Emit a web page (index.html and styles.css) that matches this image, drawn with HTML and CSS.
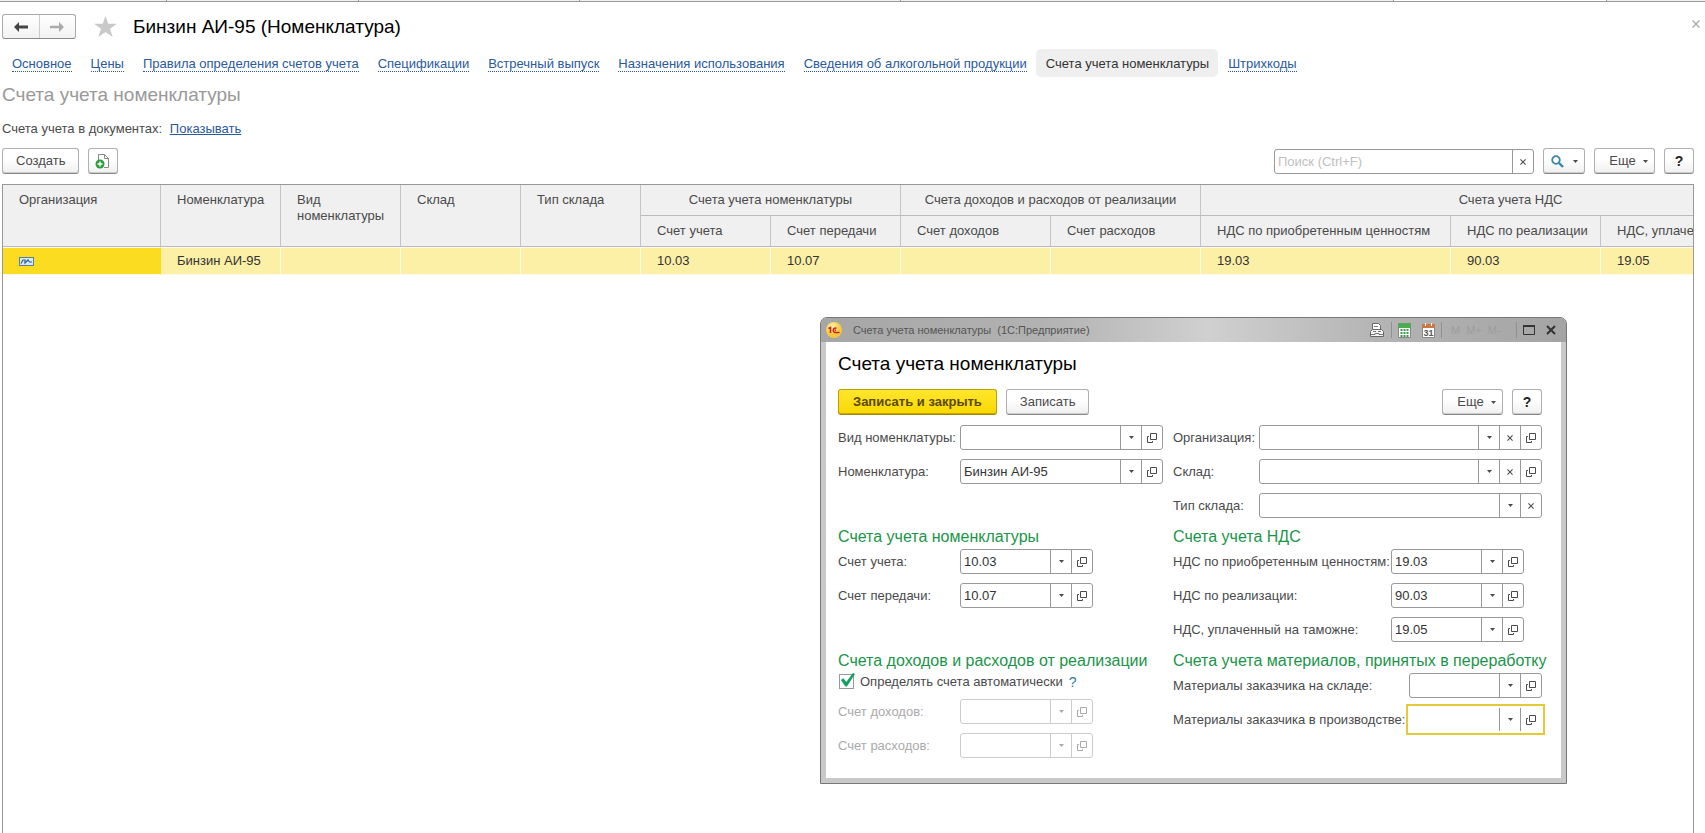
FILE: index.html
```html
<!DOCTYPE html>
<html lang="ru">
<head>
  <meta charset="UTF-8">
  <meta name="viewport" content="width=device-width, initial-scale=1.0">
  <title>Бинзин АИ-95 (Номенклатура)</title>
  <link rel="stylesheet" href="styles.css">
</head>
<body>

  <!-- Icon sprite -->
  <svg class="sprite" aria-hidden="true">
    <symbol id="i-down" viewBox="0 0 7 4"><path d="M0 0h7L3.500 4z" fill="currentColor"/></symbol>
    <symbol id="i-clear" viewBox="0 0 7 7"><path d="M.5.5l6 6M6.500.5l-6 6" stroke="currentColor" stroke-width="1.200" fill="none"/></symbol>
    <symbol id="i-open" viewBox="0 0 10 10"><path d="M3.500.5h6v6h-6zM2 3.500H.5v6h5V8" stroke="currentColor" fill="none"/></symbol>
  </svg>

  <!-- Edges of the window tabs -->
  <div class="tabstrip">
    <span class="edge e1"></span><span class="edge e2"></span><span class="edge e3"></span><span class="edge e4"></span><span class="edge e5"></span><span class="edge e6"></span>
  </div>

  <main class="page">
    <header class="page-head">
      <div class="history">
        <button type="button" aria-label="Назад"><svg width="14" height="10" viewBox="0 0 14 10"><path d="M0 5l5-5v3.500h9v3H5V10z" fill="#444"/></svg></button>
        <button type="button" aria-label="Вперед"><svg width="14" height="10" viewBox="0 0 14 10"><path d="M14 5L9 0v3.800H0v2.400h9V10z" fill="#aaa"/></svg></button>
      </div>
      <button type="button" class="plain star" aria-label="В избранное"><svg width="23" height="21" viewBox="0 0 23 21"><path d="M11.500 0l2.800 7.800H23l-7 5 2.700 8.200-7.200-5L4.300 21 7 12.800 0 7.800h8.700z" fill="#c9c9c9"/></svg></button>
      <h1>Бинзин АИ-95 (Номенклатура)</h1>
      <button type="button" class="plain page-close" aria-label="Закрыть"><svg width="8" height="8"><use href="#i-clear"/></svg></button>
    </header>

    <nav class="links">
      <a href="#"><span>Основное</span></a>
      <a href="#"><span>Цены</span></a>
      <a href="#"><span>Правила определения счетов учета</span></a>
      <a href="#"><span>Спецификации</span></a>
      <a href="#"><span>Встречный выпуск</span></a>
      <a href="#"><span>Назначения использования</span></a>
      <a href="#"><span>Сведения об алкогольной продукции</span></a>
      <a href="#" class="current"><span>Счета учета номенклатуры</span></a>
      <a href="#"><span>Штрихкоды</span></a>
    </nav>

    <h2>Счета учета номенклатуры</h2>
    <p class="docs">Счета учета в документах: <a href="#">Показывать</a></p>

    <div class="toolbar">
      <button type="button" class="btn">Создать</button>
      <button type="button" class="btn icon-btn" aria-label="Создать копированием">
        <svg width="16" height="16" viewBox="0 0 16 16"><path d="M3.500 7V1.500h6l4 4v9H9" fill="#fff" stroke="#888"/><path d="M9.500 1.500v4h4" fill="none" stroke="#888"/><circle cx="5" cy="11" r="4.500" fill="#2e9c3c"/><path d="M5 8.500v5M2.500 11h5" stroke="#fff" stroke-width="1.400"/></svg>
      </button>
      <div class="field search">
        <input type="text" placeholder="Поиск (Ctrl+F)" aria-label="Поиск">
        <button type="button" aria-label="Очистить"><svg width="6" height="6"><use href="#i-clear"/></svg></button>
      </div>
      <button type="button" class="btn find" aria-label="Найти">
        <svg width="13" height="13" viewBox="0 0 13 13"><circle cx="5" cy="5" r="3.800" fill="none" stroke="#3a86a8" stroke-width="1.800"/><path d="M8 8l4 4" stroke="#3a86a8" stroke-width="2.400"/></svg>
        <svg width="5" height="3"><use href="#i-down"/></svg>
      </button>
      <button type="button" class="btn more">Еще <svg width="5" height="3"><use href="#i-down"/></svg></button>
      <button type="button" class="btn help">?</button>
    </div>

    <div class="list">
      <table>
        <colgroup>
          <col class="w-org"><col class="w-name"><col class="w-name"><col class="w-name"><col class="w-name">
          <col class="w-acc"><col class="w-acc"><col class="w-inc"><col class="w-inc">
          <col class="w-vat"><col class="w-inc"><col class="w-customs">
        </colgroup>
        <thead>
          <tr>
            <th rowspan="2">Организация</th>
            <th rowspan="2">Номенклатура</th>
            <th rowspan="2">Вид номенклатуры</th>
            <th rowspan="2">Склад</th>
            <th rowspan="2">Тип склада</th>
            <th colspan="2" class="group">Счета учета номенклатуры</th>
            <th colspan="2" class="group">Счета доходов и расходов от реализации</th>
            <th colspan="3" class="group">Счета учета НДС</th>
          </tr>
          <tr>
            <th>Счет учета</th>
            <th>Счет передачи</th>
            <th>Счет доходов</th>
            <th>Счет расходов</th>
            <th>НДС по приобретенным ценностям</th>
            <th>НДС по реализации</th>
            <th>НДС, уплаченный на таможне</th>
          </tr>
        </thead>
        <tbody>
          <tr>
            <td class="active"><svg width="15" height="9" viewBox="0 0 15 9"><rect x=".5" y=".5" width="14" height="8" fill="#d8e8f4" stroke="#5580a8"/><path d="M2 6.500l2-3.500 2 0v3l3-3 1.500 2H13" fill="none" stroke="#2c5f96" stroke-width="1.200"/></svg></td>
            <td>Бинзин АИ-95</td>
            <td></td>
            <td></td>
            <td></td>
            <td>10.03</td>
            <td>10.07</td>
            <td></td>
            <td></td>
            <td>19.03</td>
            <td>90.03</td>
            <td>19.05</td>
          </tr>
        </tbody>
      </table>
    </div>
  </main>

  <!-- Record window -->
  <section class="window" role="dialog" aria-labelledby="winTitle">
    <div class="titlebar">
      <svg width="16" height="16" viewBox="0 0 16 16"><defs><radialGradient id="logo" cx=".4" cy=".3"><stop offset="0" stop-color="#fff6b0"/><stop offset="1" stop-color="#f6c63c"/></radialGradient></defs><circle cx="8" cy="8" r="8" fill="url(#logo)"/><path d="M2.500 6.500L4.500 5.500V11M10.500 6.300A2.200 2.200 0 1 0 8.500 10.400H13.500M10 8.300H8.800" fill="none" stroke="#c8201c" stroke-width="1.500"/></svg>
      <span class="caption">Счета учета номенклатуры&nbsp; (1С:Предприятие)</span>
      <div class="tools">
        <button type="button" class="plain" aria-label="Печать"><svg width="16" height="16" viewBox="0 0 16 16"><path d="M3.500 8V1.500h6l2 2V8" fill="#fff" stroke="#666"/><path d="M1.500 9.500l2-2h9l2 2v5h-13z" fill="#f4f4f4" stroke="#666"/><path d="M5 4.500h4M4 9.500h3M9 9.500h3M2 12.500h4v-1h4v1h4" fill="none" stroke="#777"/></svg></button>
        <i class="sep"></i>
        <button type="button" class="plain" aria-label="Калькулятор"><svg width="13" height="15" viewBox="0 0 13 15"><path d="M.5.5h12v14H.5z" fill="#fff" stroke="#888"/><path d="M0 0h13v5H0z" fill="#4faa58"/><path d="M3.500 6v8M6.500 6v8M9.500 6v8" stroke="#3f9b4c" stroke-width="2" stroke-dasharray="2 1"/></svg></button>
        <button type="button" class="plain calendar" aria-label="Календарь"><svg width="13" height="15" viewBox="0 0 13 15"><path d="M.5 1.500h12v13H.5z" fill="#fff" stroke="#888"/><path d="M0 1h13v4H0z" fill="#c87840"/><path d="M3.500 0v3M9.500 0v3" stroke="#fff"/><text x="6.500" y="13" text-anchor="middle" font-size="9" font-weight="bold" fill="#555">31</text></svg></button>
        <i class="sep"></i>
        <span class="memory"><span>M</span><span>M+</span><span>M-</span></span>
        <i class="sep"></i>
        <button type="button" class="plain" aria-label="Развернуть"><svg width="12" height="10" viewBox="0 0 12 10"><path d="M.5.5h11v9H.5z" fill="none" stroke="#333"/><path d="M0 1h12" stroke="#333" stroke-width="2"/></svg></button>
        <button type="button" class="plain" aria-label="Закрыть окно"><svg width="10" height="10" viewBox="0 0 10 10"><path d="M1 1l8 8M9 1L1 9" stroke="#333" stroke-width="2"/></svg></button>
      </div>
    </div>

    <form class="win-body">
      <h2 id="winTitle">Счета учета номенклатуры</h2>
      <div class="commands">
        <button type="button" class="btn primary">Записать и закрыть</button>
        <button type="button" class="btn">Записать</button>
        <button type="button" class="btn more">Еще <svg width="5" height="3"><use href="#i-down"/></svg></button>
        <button type="button" class="btn help">?</button>
      </div>

      <div class="groups">
        <div class="group-box left">
          <div class="row">
            <label for="kind">Вид номенклатуры:</label>
            <div class="field">
              <input type="text" id="kind">
              <button type="button" aria-label="Выбрать"><svg width="5" height="3"><use href="#i-down"/></svg></button>
              <button type="button" aria-label="Открыть"><svg width="10" height="10"><use href="#i-open"/></svg></button>
            </div>
          </div>
          <div class="row">
            <label for="item">Номенклатура:</label>
            <div class="field">
              <input type="text" id="item" value="Бинзин АИ-95">
              <button type="button" aria-label="Выбрать"><svg width="5" height="3"><use href="#i-down"/></svg></button>
              <button type="button" aria-label="Открыть"><svg width="10" height="10"><use href="#i-open"/></svg></button>
            </div>
          </div>
        </div>

        <div class="group-box owner">
          <div class="row">
            <label for="org">Организация:</label>
            <div class="field">
              <input type="text" id="org">
              <button type="button" aria-label="Выбрать"><svg width="5" height="3"><use href="#i-down"/></svg></button>
              <button type="button" aria-label="Очистить"><svg width="6" height="6"><use href="#i-clear"/></svg></button>
              <button type="button" aria-label="Открыть"><svg width="10" height="10"><use href="#i-open"/></svg></button>
            </div>
          </div>
          <div class="row">
            <label for="store">Склад:</label>
            <div class="field">
              <input type="text" id="store">
              <button type="button" aria-label="Выбрать"><svg width="5" height="3"><use href="#i-down"/></svg></button>
              <button type="button" aria-label="Очистить"><svg width="6" height="6"><use href="#i-clear"/></svg></button>
              <button type="button" aria-label="Открыть"><svg width="10" height="10"><use href="#i-open"/></svg></button>
            </div>
          </div>
          <div class="row">
            <label for="storeType">Тип склада:</label>
            <div class="field">
              <input type="text" id="storeType">
              <button type="button" aria-label="Выбрать"><svg width="5" height="3"><use href="#i-down"/></svg></button>
              <button type="button" aria-label="Очистить"><svg width="6" height="6"><use href="#i-clear"/></svg></button>
            </div>
          </div>
        </div>

        <div class="group-box left">
          <h3>Счета учета номенклатуры</h3>
          <div class="row">
            <label for="acc">Счет учета:</label>
            <div class="field short">
              <input type="text" id="acc" value="10.03">
              <button type="button" aria-label="Выбрать"><svg width="5" height="3"><use href="#i-down"/></svg></button>
              <button type="button" aria-label="Открыть"><svg width="10" height="10"><use href="#i-open"/></svg></button>
            </div>
          </div>
          <div class="row">
            <label for="transfer">Счет передачи:</label>
            <div class="field short">
              <input type="text" id="transfer" value="10.07">
              <button type="button" aria-label="Выбрать"><svg width="5" height="3"><use href="#i-down"/></svg></button>
              <button type="button" aria-label="Открыть"><svg width="10" height="10"><use href="#i-open"/></svg></button>
            </div>
          </div>
        </div>

        <div class="group-box vat">
          <h3>Счета учета НДС</h3>
          <div class="row">
            <label for="vatBuy">НДС по приобретенным ценностям:</label>
            <div class="field short">
              <input type="text" id="vatBuy" value="19.03">
              <button type="button" aria-label="Выбрать"><svg width="5" height="3"><use href="#i-down"/></svg></button>
              <button type="button" aria-label="Открыть"><svg width="10" height="10"><use href="#i-open"/></svg></button>
            </div>
          </div>
          <div class="row">
            <label for="vatSell">НДС по реализации:</label>
            <div class="field short">
              <input type="text" id="vatSell" value="90.03">
              <button type="button" aria-label="Выбрать"><svg width="5" height="3"><use href="#i-down"/></svg></button>
              <button type="button" aria-label="Открыть"><svg width="10" height="10"><use href="#i-open"/></svg></button>
            </div>
          </div>
          <div class="row">
            <label for="vatCustoms">НДС, уплаченный на таможне:</label>
            <div class="field short">
              <input type="text" id="vatCustoms" value="19.05">
              <button type="button" aria-label="Выбрать"><svg width="5" height="3"><use href="#i-down"/></svg></button>
              <button type="button" aria-label="Открыть"><svg width="10" height="10"><use href="#i-open"/></svg></button>
            </div>
          </div>
        </div>

        <div class="group-box left">
          <h3>Счета доходов и расходов от реализации</h3>
          <div class="check">
            <input type="checkbox" id="auto" checked>
            <label for="auto">Определять счета автоматически</label>
            <a href="#">?</a>
          </div>
          <div class="row disabled">
            <label for="income">Счет доходов:</label>
            <div class="field short">
              <input type="text" id="income" disabled>
              <button type="button" aria-label="Выбрать" disabled><svg width="5" height="3"><use href="#i-down"/></svg></button>
              <button type="button" aria-label="Открыть" disabled><svg width="10" height="10"><use href="#i-open"/></svg></button>
            </div>
          </div>
          <div class="row disabled">
            <label for="expense">Счет расходов:</label>
            <div class="field short">
              <input type="text" id="expense" disabled>
              <button type="button" aria-label="Выбрать" disabled><svg width="5" height="3"><use href="#i-down"/></svg></button>
              <button type="button" aria-label="Открыть" disabled><svg width="10" height="10"><use href="#i-open"/></svg></button>
            </div>
          </div>
        </div>

        <div class="group-box materials">
          <h3>Счета учета материалов, принятых в переработку</h3>
          <div class="row">
            <label for="matStore">Материалы заказчика на складе:</label>
            <div class="field short">
              <input type="text" id="matStore">
              <button type="button" aria-label="Выбрать"><svg width="5" height="3"><use href="#i-down"/></svg></button>
              <button type="button" aria-label="Открыть"><svg width="10" height="10"><use href="#i-open"/></svg></button>
            </div>
          </div>
          <div class="row">
            <label for="matProd">Материалы заказчика в производстве:</label>
            <div class="field short focused">
              <input type="text" id="matProd">
              <button type="button" aria-label="Выбрать"><svg width="5" height="3"><use href="#i-down"/></svg></button>
              <button type="button" aria-label="Открыть"><svg width="10" height="10"><use href="#i-open"/></svg></button>
            </div>
          </div>
        </div>
      </div>
    </form>
  </section>

</body>
</html>
```
FILE: styles.css
```css
/* Reset & Base */
* { margin:0; padding:0; box-sizing:border-box; }
html, body { height:100%; }
body {
  font:13px/16px "Liberation Sans",Arial,sans-serif;
  color:#4a4a4a;
  background:#fff;
  display:flex; flex-direction:column;
  overflow:hidden;
}
button, input { font:inherit; color:inherit; }
button { cursor:pointer; }
h1, h2, h3 { font-weight:normal; }
svg { display:block; flex:none; }
a { color:#2a5a9c; }
.sprite { position:absolute; width:0; height:0; }
.plain { border:none; background:none; display:flex; }

/* Tab strip */
.tabstrip {
  display:flex; flex:none; height:2px;
  background:#f0f0f0;
  border-bottom:1px solid #999;
}
.edge { border-right:1px solid #999; }
.e1 { width:167px; }
.e2 { width:192px; }
.e3 { width:221px; }
.e4 { width:321px; }
.e5 { width:493px; }
.e6 { width:213px; background:#fff; }

/* Page */
.page {
  flex:1; min-height:0;
  display:flex; flex-direction:column;
  padding:12px 11px 0 2px;
}
.page-head { display:flex; align-items:center; height:25px; }
.history {
  display:flex; width:74px; height:25px;
  border:1px solid #aaa; border-bottom-color:#888; border-radius:3px;
  background:linear-gradient(#fff,#f2f2f2);
}
.history button {
  flex:1; border:none; background:none;
  display:flex; align-items:center; justify-content:center;
}
.history button + button { border-left:1px solid #ccc; }
.star { margin:0 16px 0 18px; }
h1 { font-size:19px; line-height:24px; color:#000; }
.page-close { margin:0 -6px 6px auto; color:#aaa; }

/* Section links */
.links { display:flex; margin-top:10px; }
.links a {
  padding:7px 9px 5px 10px; height:28px;
  text-decoration:none; white-space:nowrap;
}
.links span { border-bottom:1px dotted #2a5a9c; }
.links .current { background:#efefef; border-radius:5px; color:#333; }
.links .current span { border:none; }

.page > h2 { margin-top:6px; font-size:19px; line-height:24px; color:#999; }
.docs { margin-top:14px; }
.docs a { margin-left:4px; }

/* Buttons */
.btn {
  height:26px; padding:0 13px;
  display:flex; align-items:center; justify-content:center;
  border:1px solid #b0b0b0; border-bottom-color:#888; border-radius:3px;
  box-shadow:inset 0 -1px #ccc;
  background:linear-gradient(#fff 40%,#f0f0f0);
  white-space:nowrap;
}
.icon-btn { width:30px; padding:0; }
.find { width:42px; padding:0; gap:9px; }
.more { width:61px; padding:0 0 0 8px; gap:7px; }
.help { width:30px; padding:0; font-size:14px; font-weight:bold; color:#222; }
.primary {
  padding:0 14px;
  color:#5a4a00; font-weight:bold;
  border-color:#c0a000; border-bottom-color:#a08800;
  box-shadow:inset 0 -1px #c8a800;
  background:linear-gradient(#ffe62e,#f8d800);
}
.toolbar { display:flex; gap:9px; margin-top:11px; }

/* Text fields with buttons */
.field {
  display:flex; height:25px; min-width:0;
  border:1px solid #999; border-radius:3px;
  background:#fff;
}
.field input {
  flex:1; min-width:0; padding:0 3px;
  border:none; outline:none; background:none; color:#333;
}
.field input::placeholder { color:#c0c0c0; }
.field button {
  flex:none; width:21px; border:none; border-left:1px solid #999; background:none;
  display:flex; align-items:center; justify-content:center;
}
.search { width:260px; margin-left:auto; margin-top:1px; }

/* List */
.list {
  flex:1; min-height:0; overflow:hidden;
  margin-top:10px;
  border:1px solid #999; border-bottom:none;
}
table { width:1818px; table-layout:fixed; border-collapse:separate; border-spacing:0; }
.w-org { width:158px; }
.w-name { width:120px; }
.w-acc { width:130px; }
.w-inc { width:150px; }
.w-vat { width:250px; }
.w-customs { width:220px; }
th {
  height:31px; padding:7px 4px 7px 16px;
  background:#f0f0f0;
  border-right:1px solid #c4c4c4; border-bottom:1px solid #bbb;
  font-weight:normal; text-align:left; vertical-align:top;
}
.group { text-align:center; padding:7px 4px; }
td {
  height:28px; padding:0 4px 0 16px;
  color:#333; background:#fcefa6;
  border:solid #fffbe8; border-width:1px 1px 1px 0;
}
.active { background:#fbdc20; border-right-color:#fbdc20; }

/* Record window */
.window {
  position:absolute; left:820px; top:317px; width:747px;
  padding:0 5px 5px;
  background:#c9c9c9;
  border:1px solid #777; border-radius:7px 7px 0 0;
}
.titlebar {
  display:flex; align-items:center; height:24px;
  margin:0 -5px; padding:0 10px 0 5px;
  border-radius:6px 6px 0 0;
  background:linear-gradient(90deg,#a6a6a6,#b2b2b2 30%,#d0d0d0 52%,#b4b4b4 75%,#a4a4a4);
}
.caption { margin-left:11px; font-size:11px; color:#555; white-space:nowrap; }
.tools { display:flex; align-items:center; gap:6px; margin-left:auto; }
.tools .calendar { margin-left:5px; }
.sep { width:1px; height:16px; background:#909090; }
.memory { display:flex; gap:6px; width:62px; padding-left:3px; font-size:11px; color:#9c9c9c; }
.tools .plain:last-child { margin-left:5px; }

.win-body { background:#fff; padding:9px 19px 20px 12px; }
.win-body h2 { font-size:19px; line-height:26px; color:#000; }
.commands { display:flex; gap:9px; margin-top:12px; }
.commands .more { margin-left:auto; }
.groups {
  display:grid; grid-template-columns:325px minmax(0,1fr);
  gap:8px 10px;
  margin-top:10px;
}
.group-box { display:flex; flex-direction:column; gap:9px; min-width:0; }
h3 { margin-bottom:-8px; font-size:16px; line-height:22px; color:#1a9548; white-space:nowrap; }
.row { display:flex; align-items:center; }
.row label { flex:none; white-space:nowrap; }
.row .field { flex:1; }
.row .short { flex:none; width:133px; }
.left label { width:122px; }
.owner label { width:86px; }
.vat label { width:218px; }
.materials label { width:236px; }
.disabled { color:#aaa; }
.disabled .field, .disabled .field button { border-color:#ccc; }
.focused { border-color:transparent; border-radius:0; outline:2px solid #e6c936; outline-offset:1px; }

/* Tick box */
.check { display:flex; align-items:center; height:17px; }
.check input {
  appearance:none; width:15px; height:15px; margin-left:1px;
  border:1px solid #999; background:#fff;
}
.check input:checked::before {
  content:""; display:block; width:15px; height:14px; margin-top:-2px;
  background:#12a05c;
  clip-path:polygon(6% 50%,22% 38%,42% 64%,86% 0,100% 8%,46% 96%,36% 96%);
}
.check label { width:auto; margin:0 6px; }
.check a { font-size:14px; text-decoration:none; color:#2a7ab8; }
```
